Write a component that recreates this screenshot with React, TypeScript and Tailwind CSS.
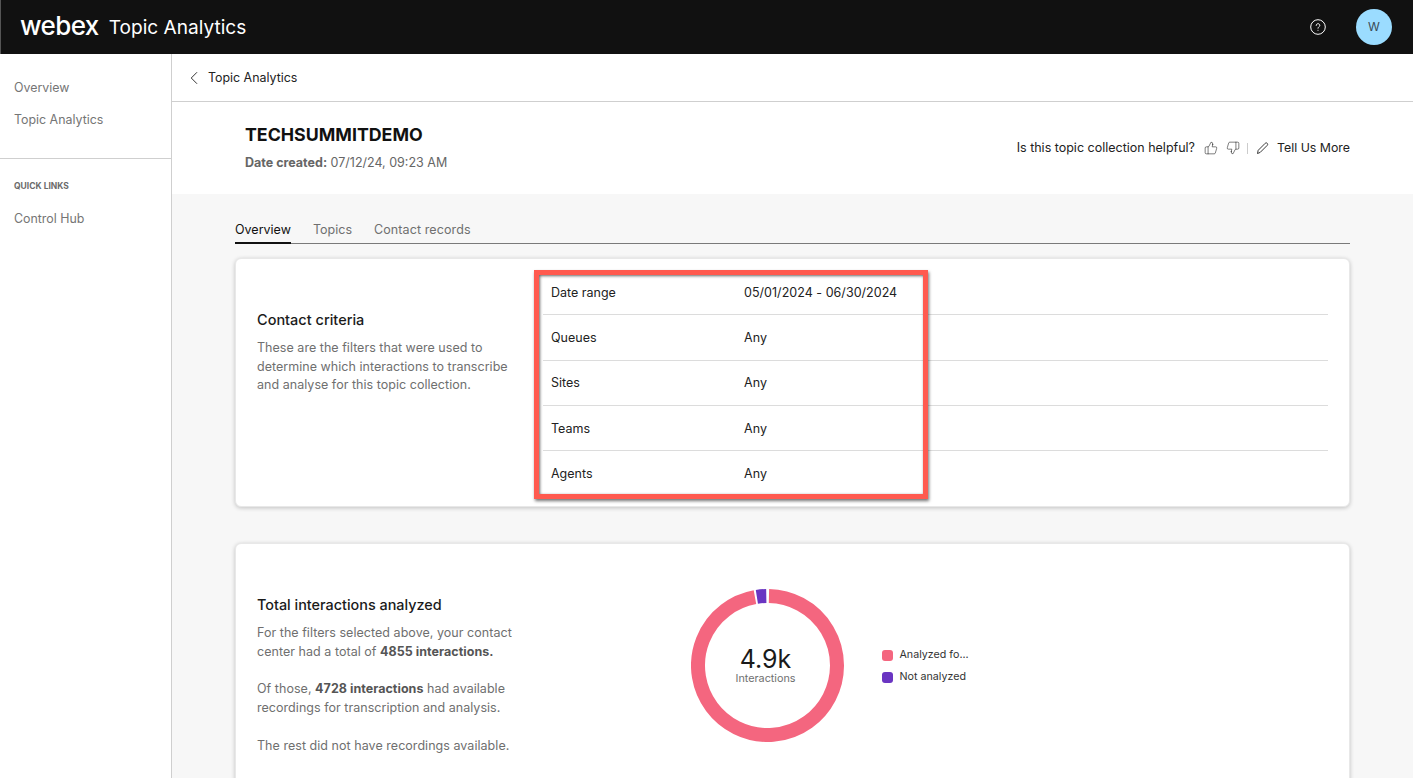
import React from "react";
import { ChevronLeft, ThumbsUp, ThumbsDown } from "lucide-react";

const font = { fontFamily: "Inter, 'Noto Sans', sans-serif" };

function arc(cx: number, cy: number, r: number, a0: number, a1: number) {
  const p = (a: number) => {
    const t = ((a - 90) * Math.PI) / 180;
    return `${cx + r * Math.cos(t)} ${cy + r * Math.sin(t)}`;
  };
  return `M ${p(a0)} A ${r} ${r} 0 ${a1 - a0 > 180 ? 1 : 0} 1 ${p(a1)}`;
}

const rows = [
  ["Date range", "05/01/2024 - 06/30/2024"],
  ["Queues", "Any"],
  ["Sites", "Any"],
  ["Teams", "Any"],
  ["Agents", "Any"],
];

export default function App() {
  return (
    <div style={font} className="relative h-[778px] w-[1413px] overflow-hidden bg-white flex flex-col font-['Inter',sans-serif]">
      <header className="h-[54px] shrink-0 bg-[#111111] flex items-center pl-[19px] pr-[21px] border-l border-[#555]">
        <span className="text-[26px] font-medium leading-none text-white tracking-[-0.6px] relative -top-[1px]">webex</span>
        <span className="ml-[10px] text-[19.1px] font-normal text-white leading-none relative top-[1px]">Topic Analytics</span>
        <div className="ml-auto flex items-center gap-[30px]">
          <svg width="16" height="16" viewBox="0 0 16 16" fill="none" stroke="white" strokeWidth="1">
            <circle cx="8" cy="8" r="7.3" />
            <path d="M6.2 6.4c0-1 .8-1.7 1.8-1.7s1.8.7 1.8 1.7c0 1.3-1.8 1.4-1.8 2.8" strokeLinecap="round" />
            <circle cx="8" cy="11.2" r="0.55" fill="white" stroke="none" />
          </svg>
          <div className="w-[36px] h-[36px] rounded-full bg-[#9bdcff] flex items-center justify-center text-[12px] text-[#3a4a55]">W</div>
        </div>
      </header>

      <div className="flex flex-1 min-h-0">
        <aside className="w-[172px] shrink-0 border-r border-[#cfcfcf] bg-white">
          <nav className="pt-[25px] pl-[14px] flex flex-col gap-[14px] text-[12.4px] leading-[18px] text-[#757575] h-[104px]">
            <span>Overview</span>
            <span>Topic Analytics</span>
          </nav>
          <div className="border-t border-[#cfcfcf] pt-[22px] pl-[14px]">
            <div className="text-[8.5px] font-bold leading-[11px] text-[#6b6b6b]">QUICK LINKS</div>
            <div className="mt-[18px] text-[12.4px] leading-[18px] text-[#757575]">Control Hub</div>
          </div>
        </aside>

        <main className="flex-1 min-w-0 flex flex-col bg-[#f7f7f7]">
          <div className="h-[48px] shrink-0 bg-white border-b border-[#cfcfcf] flex items-center pl-[11px] pt-[1px] text-[12.4px] text-[#222]">
            <ChevronLeft size={22} strokeWidth={1} className="text-[#222]" />
            <span className="ml-[3px]">Topic Analytics</span>
          </div>

          <div className="h-[92px] shrink-0 bg-white flex pl-[73px] pr-[63px] pt-[22px]">
            <div>
              <h1 className="text-[17.8px] font-bold leading-[22px] text-[#111]">TECHSUMMITDEMO</h1>
              <p className="mt-[8px] text-[12.5px] leading-[18px] text-[#666]"><b className="font-bold">Date created:</b> 07/12/24, 09:23 AM</p>
            </div>
            <div className="ml-auto flex items-center h-[24px] mt-[12px] text-[12.5px] text-[#222]">
              <span>Is this topic collection helpful?</span>
              <ThumbsUp size={14} strokeWidth={1} className="ml-[9px]" />
              <ThumbsDown size={14} strokeWidth={1} className="ml-[8px]" />
              <span className="ml-[7px] w-px h-[11px] bg-[#cccccc]" />
              <svg className="ml-[8px]" width="14" height="14" viewBox="0 0 14 14" fill="none" stroke="#222" strokeWidth="0.9" strokeLinejoin="round">
                <path d="M1.5 12.5l.7-3.2 7-7c.6-.6 1.5-.6 2 0 .6.6.6 1.5 0 2.1l-7 7-2.7 1.1z" />
              </svg>
              <span className="ml-[7px] text-[12.35px]">Tell Us More</span>
            </div>
          </div>

          <div className="flex-1 min-h-0 overflow-hidden pl-[63px] pr-[63px] pt-[27px]">
            <div className="flex h-[23px] border-b border-[#7a7a7a] text-[12.5px] leading-[17px]">
              <span className="h-[23px] border-b-[2px] border-[#111] text-[#111] mr-[22px] w-[56px]">Overview</span>
              <span className="text-[#6f6f6f] mr-[22px]">Topics</span>
              <span className="text-[#6f6f6f] tracking-[0.1px]">Contact records</span>
            </div>

            <section className="mt-[14px] h-[249px] bg-white rounded-[6px] border border-[#e8e8e8] shadow-[0_1px_4px_rgba(0,0,0,0.22)] flex pl-[21px] pr-[21px]">
              <div className="w-[286px] shrink-0 pt-[51px]">
                <h2 className="text-[14.5px] font-medium leading-[20px] text-[#1a1a1a]">Contact criteria</h2>
                <p className="mt-[9px] text-[12.5px] leading-[18.5px] text-[#6f6f6f] tracking-[0.03px] whitespace-nowrap">
                  These are the filters that were used to<br />determine which interactions to transcribe<br />and analyse for this topic collection.
                </p>
              </div>
              <div className="flex-1 pt-[11px]">
                {rows.map(([k, v], i) => (
                  <div key={k} className={`flex items-center h-[45.3px] pl-[8px] pt-[2px] text-[12.5px] text-[#222] ${i < 4 ? "border-b border-[#dcdcdc]" : ""}`}>
                    <span className="w-[193px]">{k}</span>
                    <span className="tracking-[0.03px]">{v}</span>
                  </div>
                ))}
              </div>
            </section>

            <section className="mt-[36px] h-[300px] bg-white rounded-[6px] border border-[#e8e8e8] shadow-[0_1px_4px_rgba(0,0,0,0.22)] flex pl-[21px]">
              <div className="w-[286px] shrink-0 pt-[51px]">
                <h2 className="text-[14.4px] font-medium leading-[20px] text-[#1a1a1a]">Total interactions analyzed</h2>
                <div className="mt-[9px] text-[12.5px] leading-[18.7px] text-[#6f6f6f] tracking-[0.04px] whitespace-nowrap">
                  <p>For the filters selected above, your contact<br />center had a total of <b className="font-bold text-[#555]">4855 interactions.</b></p>
                  <p className="mt-[19px]">Of those, <b className="font-bold text-[#555]">4728 interactions</b> had available<br />recordings for transcription and analysis.</p>
                  <p className="mt-[19px]">The rest did not have recordings available.</p>
                </div>
              </div>
              <div className="flex pt-[45px] pl-[147.5px]">
                <div className="relative w-[153px] h-[153px]">
                  <svg width="153" height="153" viewBox="0 0 153 153" fill="none" strokeWidth="14">
                    <path d={arc(76.5, 76.5, 69.5, 1.2, 349.6)} stroke="#f4667f" />
                    <path d={arc(76.5, 76.5, 69.5, 351.2, 359)} stroke="#6a35c2" />
                  </svg>
                  <div className="absolute inset-0 pr-[3px] pt-[1px] flex flex-col items-center justify-center">
                    <span className="text-[25px] leading-[26px] text-[#1a1a1a]">4.9k</span>
                    <span className="text-[10.8px] leading-[14px] text-[#6f6f6f]">Interactions</span>
                  </div>
                </div>
                <div className="ml-[38px] pt-[59px] flex flex-col gap-[8px] text-[10.7px] leading-[14px] text-[#333]">
                  <div className="flex items-center gap-[7px]"><span className="w-[11px] h-[11px] rounded-[3px] bg-[#f4667f]" />Analyzed fo...</div>
                  <div className="flex items-center gap-[7px]"><span className="w-[11px] h-[11px] rounded-[3px] bg-[#6a35c2]" />Not analyzed</div>
                </div>
              </div>
            </section>
          </div>
        </main>
      </div>

      <div className="absolute left-[534px] top-[270px] w-[394px] h-[229px] border-[5px] border-[#ff5a4f] shadow-[inset_1px_1px_3px_rgba(0,0,0,0.6),1px_2px_3px_rgba(0,0,0,0.55)]" />
    </div>
  );
}
